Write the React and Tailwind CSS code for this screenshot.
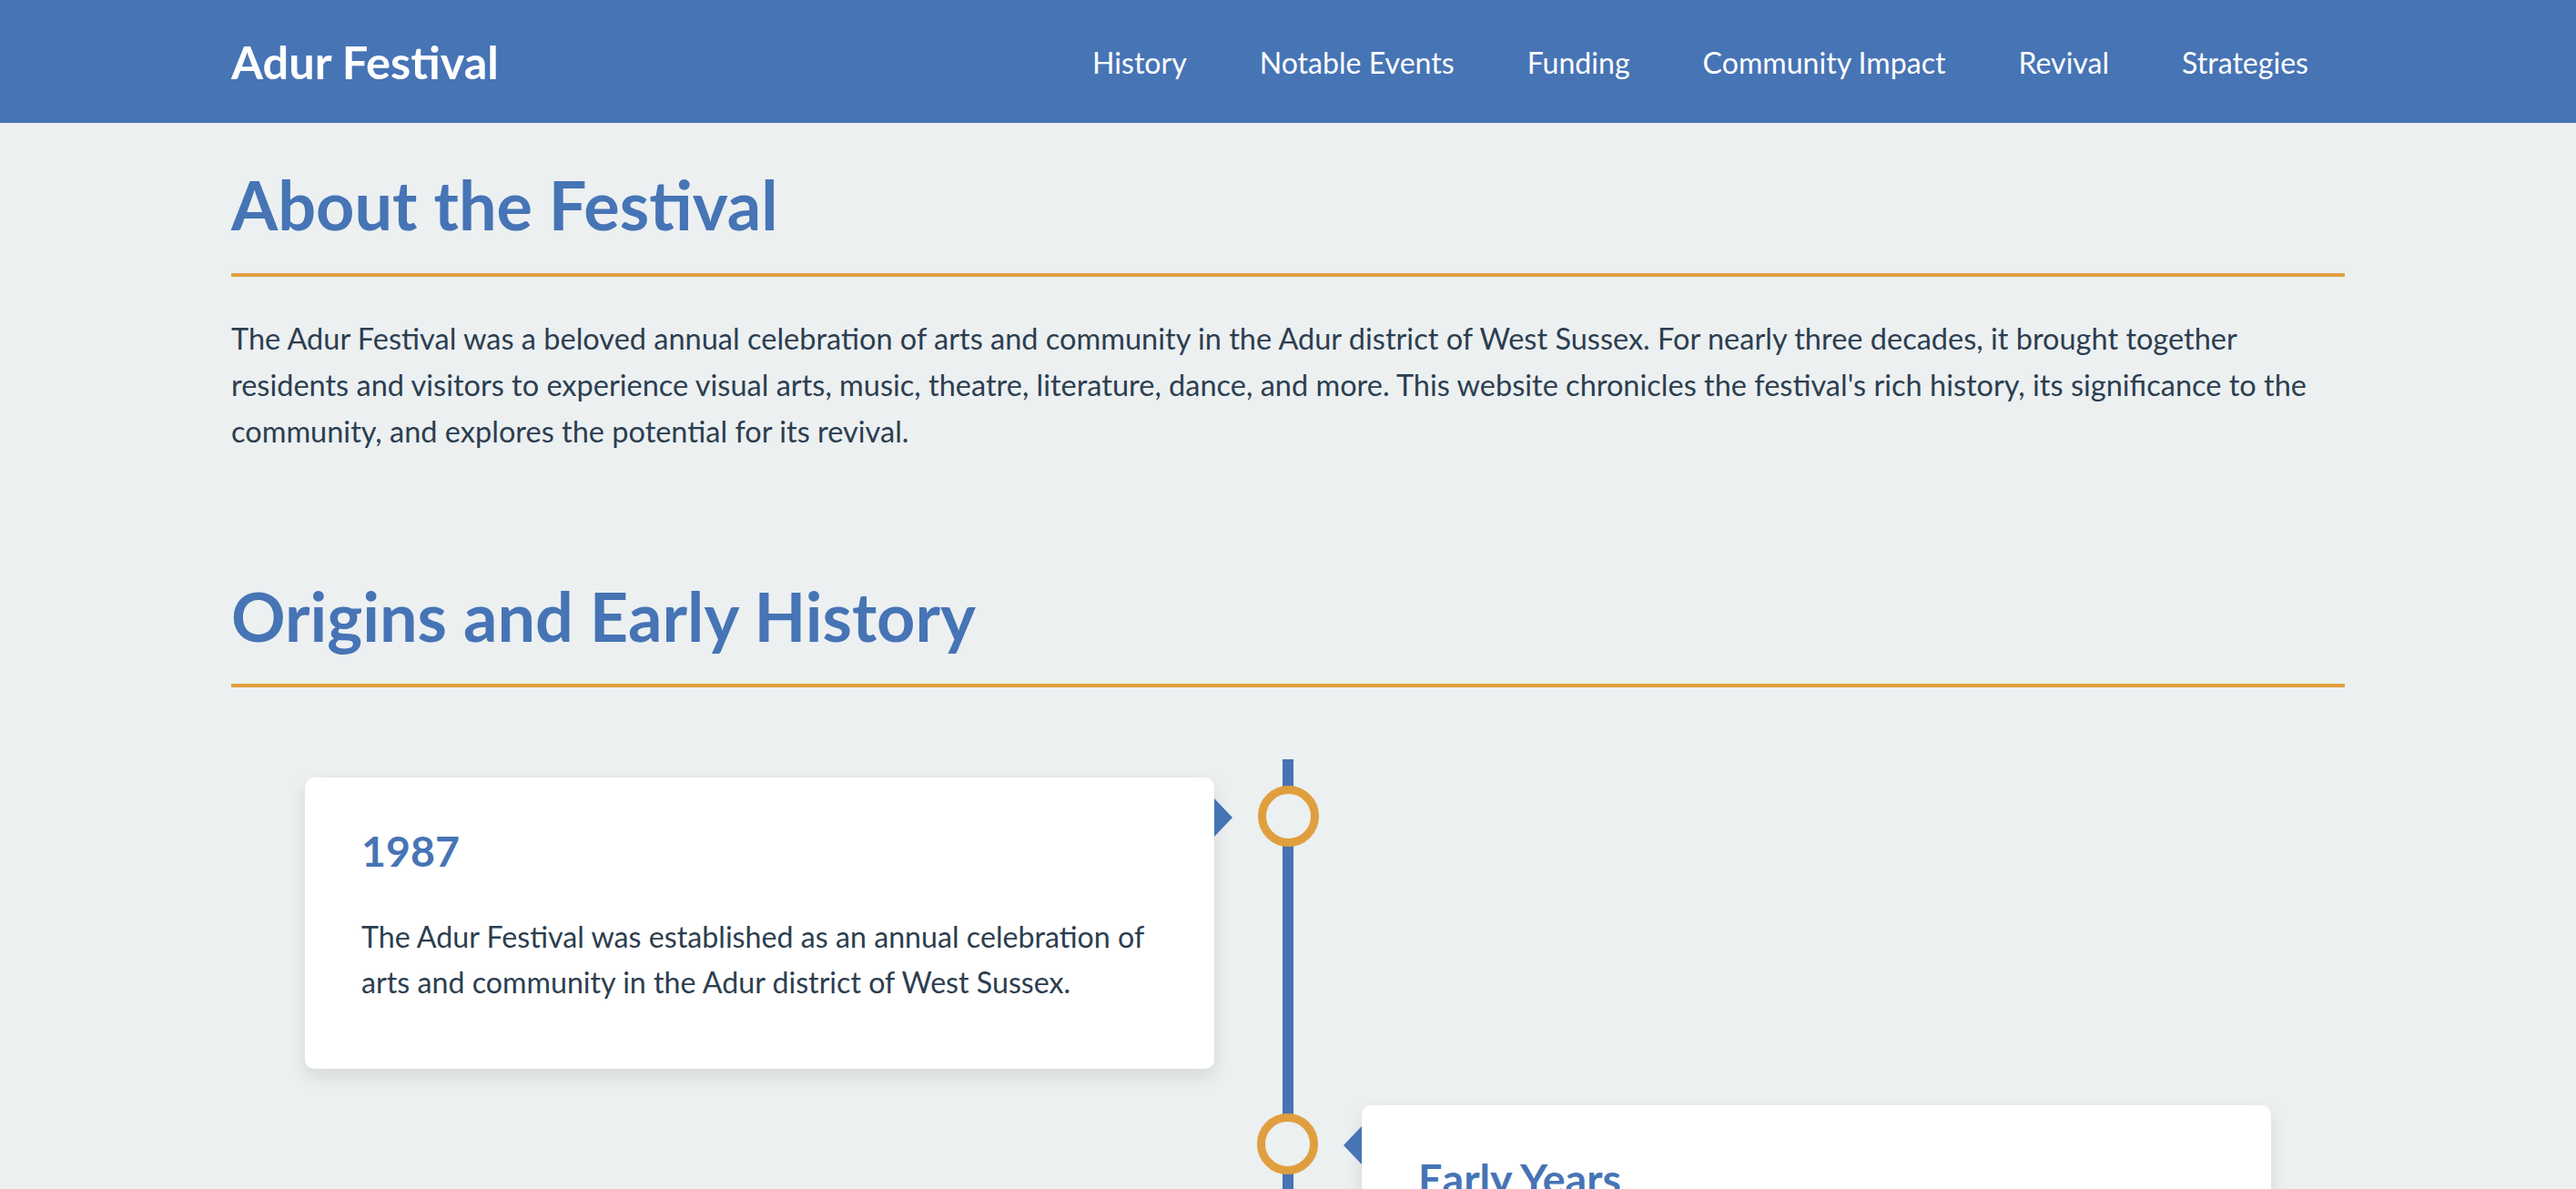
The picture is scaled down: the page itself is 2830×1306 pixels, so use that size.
const links = ['History', 'Notable Events', 'Funding', 'Community Impact', 'Revival', 'Strategies'];

const events = [
  {
    title: '1987',
    text: 'The Adur Festival was established as an annual celebration of arts and community in the Adur district of West Sussex.',
  },
  {
    title: 'Early Years',
    text: 'The festival quickly grew, bringing together local artists, performers and audiences from across the district each summer.',
  },
  {
    title: '1990s',
    text: 'Programmes expanded to include visual arts, music, theatre, literature and dance, with events held in venues across Shoreham, Lancing and Southwick.',
  },
];

const TimelineItem = ({ item, side }) => {
  const left = side === 'left';
  return (
    <div className={`relative w-1/2 px-[81px] py-[20px] ${left ? '' : 'ml-auto'}`}>
      <div
        className={`absolute top-[29px] z-10 h-[67px] w-[67px] rounded-full border-[9px] border-[#e09f3e] bg-[#ecf0f1] ${
          left ? 'right-[-34px]' : 'left-[-34px]'
        }`}
      />
      {left ? (
        <div className="absolute right-[61px] top-[43px] h-0 w-0 border-y-[21px] border-l-[20px] border-y-transparent border-l-[#4674b5]" />
      ) : (
        <div className="absolute left-[61px] top-[43px] h-0 w-0 border-y-[21px] border-r-[20px] border-y-transparent border-r-[#4674b5]" />
      )}
      <div className="rounded-[10px] bg-white pb-[70px] pl-[62px] pr-[63px] pt-[53px] shadow-[0_8px_20px_rgba(0,0,0,0.1)]">
        <h3 className="text-[46.5px] font-bold leading-[1.2] text-[#4674b5]">{item.title}</h3>
        <p className="mt-[41px] text-[32.2px] leading-[50px] text-[#2c3e50]">{item.text}</p>
      </div>
    </div>
  );
};

const SectionTitle = ({ children }) => (
  <h2 className="border-b-4 border-[#e09f3e] pb-[30px] text-[73.8px] font-bold leading-[1.2] text-[#4674b5]">
    {children}
  </h2>
);

export default function App() {
  return (
    <div className="min-h-screen bg-[#ecf0f1] font-['Lato','Liberation_Sans',sans-serif] text-[#2c3e50]">
      <header className="h-[135px] bg-[#4674b5]">
        <div className="mx-auto flex h-full w-[2322px] items-center justify-between">
          <a className="text-[50.5px] font-bold text-white">Adur Festival</a>
          <nav className="mt-[3px] flex">
            {links.map((link) => (
              <a key={link} className="px-[40px] text-[32.1px] text-white">
                {link}
              </a>
            ))}
          </nav>
        </div>
      </header>

      <main className="mx-auto w-[2322px] pb-[120px]">
        <section className="pt-[46px]">
          <SectionTitle>About the Festival</SectionTitle>
          <p className="mt-[42px] text-[32.5px] leading-[51px]">
            The Adur Festival was a beloved annual celebration of arts and community in the Adur district of West
            Sussex. For nearly three decades, it brought together residents and visitors to experience visual arts,
            music, theatre, literature, dance, and more. This website chronicles the festival's rich history, its
            significance to the community, and explores the potential for its revival.
          </p>
        </section>

        <section className="pt-[134px]">
          <SectionTitle>Origins and Early History</SectionTitle>
          <div className="relative mt-[79px]">
            <div className="absolute bottom-0 left-1/2 top-0 w-[12px] -translate-x-1/2 bg-[#4674b5]" />
            {events.map((item, i) => (
              <TimelineItem key={item.title} item={item} side={i % 2 === 0 ? 'left' : 'right'} />
            ))}
          </div>
        </section>
      </main>
    </div>
  );
}
